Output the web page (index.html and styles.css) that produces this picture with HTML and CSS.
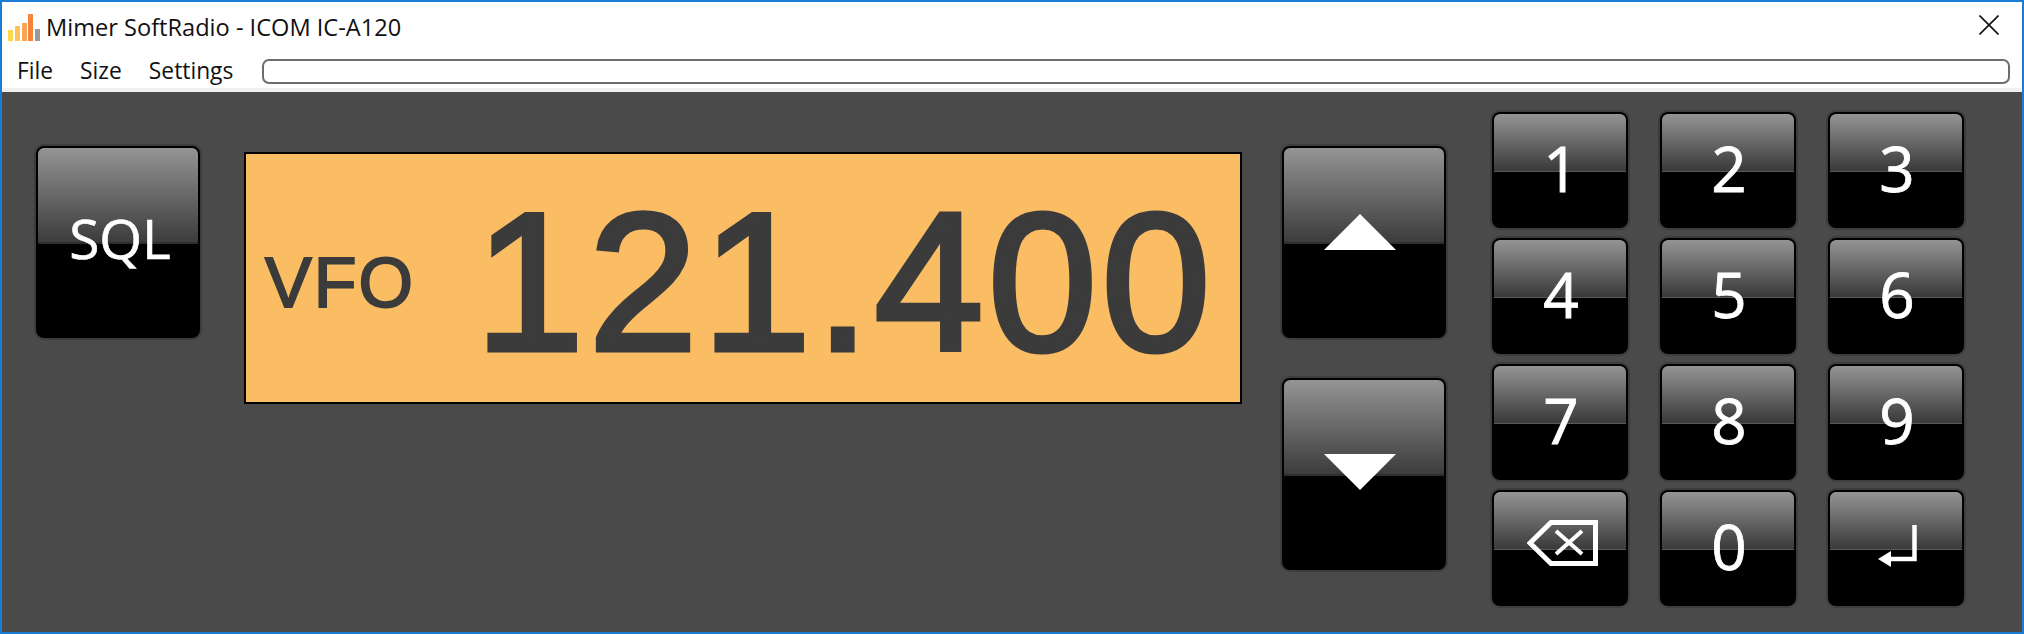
FILE: index.html
```html
<!DOCTYPE html>
<html lang="en">
<head>
    <meta charset="UTF-8">
    <title>Mimer SoftRadio - ICOM IC-A120</title>
    <link rel="stylesheet" href="styles.css">
</head>
<body>
    <div class="window">
        <div class="titlebar">
            <svg class="app-icon" width="32" height="27" viewBox="0 0 32 27">
                <rect x="0" y="16" width="5" height="11" fill="#fdd74a"/>
                <rect x="7" y="12" width="5" height="15" fill="#fbc35a"/>
                <rect x="14" y="9" width="5" height="18" fill="#f9a556"/>
                <rect x="20" y="0" width="5" height="27" fill="#f5843c"/>
                <rect x="27" y="15" width="5" height="12" fill="#9a9a9a"/>
            </svg>
            <span class="title">Mimer SoftRadio - ICOM IC-A120</span>
            <svg class="close" width="20" height="20" viewBox="0 0 20 20">
                <path d="M0.5 0.5L19.5 19.5M19.5 0.5L0.5 19.5" stroke="#111" stroke-width="1.6" fill="none"/>
            </svg>
        </div>
        <div class="menubar">
            <span class="menu-item">File</span>
            <span class="menu-item">Size</span>
            <span class="menu-item">Settings</span>
            <div class="status-bar"></div>
        </div>

        <div class="panel">
            <div class="sql-col">
                <div class="btn btn-big btn-sql">SQL</div>
            </div>

            <div class="display">
                <span class="mode">VFO</span>
                <span class="freq">121.400</span>
            </div>

            <div class="arrow-col">
                <div class="btn btn-big">
                    <svg class="arrow-up" width="72" height="36" viewBox="0 0 72 36"><path d="M36 0L72 36H0Z" fill="#fff"/></svg>
                </div>
                <div class="btn btn-big">
                    <svg class="arrow-down" width="72" height="36" viewBox="0 0 72 36"><path d="M0 0H72L36 36Z" fill="#fff"/></svg>
                </div>
            </div>

            <div class="keypad">
                <div class="btn key">1</div>
                <div class="btn key">2</div>
                <div class="btn key">3</div>
                <div class="btn key">4</div>
                <div class="btn key">5</div>
                <div class="btn key">6</div>
                <div class="btn key">7</div>
                <div class="btn key">8</div>
                <div class="btn key">9</div>
                <div class="btn key">
                    <svg class="icon-back" width="71" height="46" viewBox="0 0 71 46">
                        <path d="M24 2.5H68.5V43.5H24L3 23Z" fill="none" stroke="#fff" stroke-width="5"/>
                        <path d="M29 11L55 34M55 11L29 34" stroke="#fff" stroke-width="4" fill="none"/>
                    </svg>
                </div>
                <div class="btn key">0</div>
                <div class="btn key">
                    <svg class="icon-enter" width="39" height="42" viewBox="0 0 39 42">
                        <path d="M36.5 0V34H10" fill="none" stroke="#fff" stroke-width="4.5"/>
                        <path d="M0 34L13 26V42Z" fill="#fff"/>
                    </svg>
                </div>
            </div>
        </div>
    </div>
</body>
</html>
```

FILE: styles.css
```css
* {
    box-sizing: border-box;
}

body {
    margin: 0;
    font-family: 'Open Sans', sans-serif;
}

.window {
    width: 2024px;
    height: 634px;
    border: 2px solid #1b7cd3;
    display: flex;
    flex-direction: column;
    background: #4a4a4a;
}

.titlebar {
    height: 43px;
    background: white;
    display: flex;
    align-items: center;
    padding-left: 6px;
    color: #111;
}

.app-icon {
    margin-right: 6px;
    margin-top: 8px;
    filter: blur(0.6px);
}

.title {
    font-size: 23.6px;
    flex: 1;
    margin-top: 7px;
}

.close {
    margin-right: 23px;
    margin-top: 3px;
}

.menubar {
    height: 47px;
    background: white;
    border-bottom: 4px solid #f0f0f0;
    display: flex;
    align-items: center;
    padding-left: 15px;
    color: #111;
    font-size: 22.8px;
}

.menu-item {
    margin-right: 27px;
    margin-top: 8px;
}

.status-bar {
    flex: 1;
    height: 25px;
    margin-left: 2px;
    margin-right: 12px;
    margin-top: 9px;
    border: 2px solid #6d6d6d;
    border-radius: 7px;
}

.panel {
    flex: 1;
    display: flex;
    align-items: flex-start;
    padding-left: 34px;
    padding-top: 20px;
}

.btn {
    display: flex;
    align-items: center;
    justify-content: center;
    color: white;
    border: 2px solid black;
    border-radius: 8px;
    box-shadow: 0 0 0 2px #3d3d3d;
    background: linear-gradient(#949494, #3a3a3a 50.5%, #5a5a5a 50.5%, #5a5a5a 51.5%, #000 51.5%);
}

.btn-big {
    width: 164px;
    height: 192px;
    background: linear-gradient(#949494, #3c3c3c 50%, #2e2e2e 50%, #2e2e2e 51%, #000 51%);
}

.sql-col {
    margin-top: 34px;
}

.btn-sql {
    font-size: 55px;
    padding-bottom: 10px;
    padding-left: 4px;
    -webkit-text-stroke: 0.6px white;
}

.display {
    width: 998px;
    height: 252px;
    margin-top: 40px;
    margin-left: 44px;
    border: 2px solid black;
    background: #fbbd64;
    color: #3b3b3b;
    display: flex;
    align-items: center;
    padding-left: 19px;
    padding-top: 10px;
    filter: blur(0.5px);
}

.mode {
    font-family: 'Liberation Sans', sans-serif;
    font-size: 70px;
    line-height: 1;
    -webkit-text-stroke: 2px #3b3b3b;
    letter-spacing: 2px;
    width: 210px;
}

.freq {
    font-family: 'Liberation Sans', sans-serif;
    font-size: 196px;
    line-height: 1;
    letter-spacing: 4.5px;
    -webkit-text-stroke: 5px #3b3b3b;
}

.arrow-col {
    display: flex;
    flex-direction: column;
    gap: 40px;
    margin-top: 34px;
    margin-left: 40px;
}

.arrow-up {
    margin-bottom: 21px;
    margin-right: 8px;
}

.arrow-down {
    margin-bottom: 4px;
    margin-right: 8px;
}

.keypad {
    display: grid;
    grid-template-columns: repeat(3, 136px);
    grid-auto-rows: 116px;
    gap: 10px 32px;
    margin-left: 46px;
}

.key {
    font-size: 62px;
    line-height: 1;
    padding-bottom: 5px;
    padding-left: 2px;
    -webkit-text-stroke: 0.8px white;
}

.icon-back {
    margin-left: 3px;
    margin-bottom: 6px;
}

.icon-enter {
    margin-left: 1px;
}
```
